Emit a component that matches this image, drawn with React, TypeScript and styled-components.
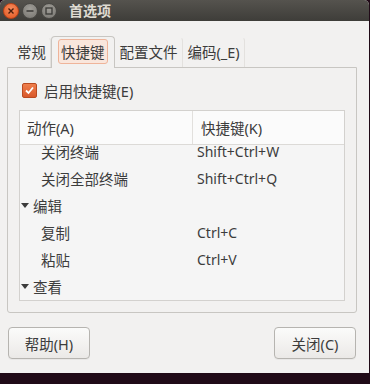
import styled, { createGlobalStyle } from 'styled-components';

const GlobalStyle = createGlobalStyle`
  html, body {
    margin: 0;
    padding: 0;
    background: #200a17;
  }
  body {
    font-family: "Noto Sans", "Noto Sans CJK SC", sans-serif;
    color: #3c3c3c;
  }
`;

const Window = styled.div`
  width: 369px;
  height: 373px;
  background: #f2f1f0;
  display: flex;
  flex-direction: column;
  overflow: hidden;
  border-radius: 5px 5px 0 0;
`;

const TitleBar = styled.div`
  height: 21px;
  background: linear-gradient(#55534e, #3e3d39);
  display: flex;
  align-items: center;
  padding-left: 3px;
  gap: 3px;
`;

const WinButton = styled.div<{ $close?: boolean }>`
  width: 16px;
  height: 16px;
  border-radius: 50%;
  display: flex;
  align-items: center;
  justify-content: center;
  background: ${p => (p.$close ? 'radial-gradient(circle at 50% 35%, #f58b5d, #e2561f)' : 'radial-gradient(circle at 50% 35%, #a09e98, #76746f)')};
  border: 1px solid ${p => (p.$close ? '#b8431a' : '#4a4945')};
  box-sizing: border-box;
`;

const Title = styled.div`
  margin-left: 9px;
  color: #dfdbd2;
  font-weight: bold;
  font-size: 14px;
  line-height: 21px;
`;

const Body = styled.div`
  flex: 1;
  display: flex;
  flex-direction: column;
  padding: 14px 12px 0 7px;
`;

const TabStrip = styled.div`
  display: flex;
  align-items: flex-end;
  height: 32px;
  padding-left: 5px;
`;

const Tab = styled.div<{ $active?: boolean }>`
  height: ${p => (p.$active ? '32px' : '30px')};
  padding: 0 ${p => (p.$active ? '6px' : '4px')} 2px;
  margin-bottom: ${p => (p.$active ? '-1px' : '0')};
  display: flex;
  align-items: center;
  font-size: 14.5px;
  box-sizing: border-box;
  position: relative;
  z-index: ${p => (p.$active ? 1 : 0)};
  background: #f2f1f0;
  border: 1px solid ${p => (p.$active ? '#c8c6c2' : 'transparent')};
  border-bottom: none;
  border-right-color: ${p => (p.$active ? '#c8c6c2' : '#e3e1de')};
  border-radius: 4px 4px 0 0;
`;

const FocusRing = styled.span`
  padding: 1px 2px;
  border: 1px solid #efb49a;
  border-radius: 3px;
  background: #f9e6dc;
`;

const Frame = styled.div`
  height: 246px;
  border: 1px solid #c8c6c2;
  border-radius: 0 0 3px 3px;
  box-sizing: border-box;
  padding: 14px 11px 11px 11px;
  display: flex;
  flex-direction: column;
`;

const CheckRow = styled.label`
  display: flex;
  align-items: center;
  gap: 7px;
  font-size: 14.5px;
  padding-left: 3px;
  height: 16px;
`;

const CheckBox = styled.span`
  width: 15px;
  height: 15px;
  border-radius: 2px;
  background: linear-gradient(#ef7f4c, #d9582a);
  border: 1px solid #b94a20;
  box-sizing: border-box;
  display: flex;
  align-items: center;
  justify-content: center;
`;

const Tree = styled.div`
  margin-top: 12px;
  flex: 1;
  border: 1px solid #d3d1ce;
  background: #f5f5f5;
  display: flex;
  flex-direction: column;
  overflow: hidden;
`;

const Header = styled.div`
  height: 33px;
  flex-shrink: 0;
  display: grid;
  grid-template-columns: 173px 1fr;
  background: #fbfbfb;
  border-bottom: 1px solid #dcdad7;
  font-size: 14.5px;
  position: relative;
  z-index: 1;
`;

const HeaderCell = styled.div<{ $last?: boolean }>`
  display: flex;
  align-items: center;
  padding-left: ${p => (p.$last ? '8px' : '7px')};
  border-right: ${p => (p.$last ? 'none' : '1px solid #e2e0dd')};
`;

// list is scrolled a few pixels, so the first row sits partly under the header
const Rows = styled.div`
  margin-top: -7px;
`;

const Row = styled.div`
  height: 27px;
  display: grid;
  grid-template-columns: 174px 1fr;
  align-items: center;
  font-size: 14.5px;
`;

const NameCell = styled.div<{ $depth: number }>`
  display: flex;
  align-items: center;
  padding-left: ${p => (p.$depth ? '21px' : '1px')};
  white-space: nowrap;
`;

const Expander = styled.span`
  width: 0;
  height: 0;
  border-left: 4px solid transparent;
  border-right: 4px solid transparent;
  border-top: 5px solid #3c3c3c;
  margin: 0 4px 0 0;
`;

const KeyCell = styled.div`
  padding-left: 3px;
  font-size: 14px;
`;

const Footer = styled.div`
  display: flex;
  justify-content: space-between;
  padding: 14px 13px 0 8px;
  margin-left: -7px;
  margin-right: -12px;
`;

const Button = styled.button`
  width: 82px;
  height: 32px;
  border: 1px solid #b6b4b0;
  border-radius: 4px;
  background: linear-gradient(#fbfbfa, #ebe9e7);
  font-family: "Noto Sans", "Noto Sans CJK SC", sans-serif;
  font-size: 14.5px;
  color: #3c3c3c;
  box-shadow: 0 1px 0 rgba(0, 0, 0, 0.04);
  padding: 0;
`;

type Item = { name: string; key?: string; group?: boolean };

const items: Item[] = [
  { name: '关闭终端', key: 'Shift+Ctrl+W' },
  { name: '关闭全部终端', key: 'Shift+Ctrl+Q' },
  { name: '编辑', group: true },
  { name: '复制', key: 'Ctrl+C' },
  { name: '粘贴', key: 'Ctrl+V' },
  { name: '查看', group: true },
];

export default function App() {
  return (
    <>
      <GlobalStyle />
      <Window>
        <TitleBar>
          <WinButton $close>
            <svg width="8" height="8" viewBox="0 0 8 8">
              <path d="M1.5 1.5 L6.5 6.5 M6.5 1.5 L1.5 6.5" stroke="#4a1d0c" strokeWidth="1.4" />
            </svg>
          </WinButton>
          <WinButton>
            <svg width="8" height="8" viewBox="0 0 8 8">
              <path d="M0.5 4 H7.5" stroke="#3a3936" strokeWidth="1.6" />
            </svg>
          </WinButton>
          <WinButton>
            <svg width="8" height="8" viewBox="0 0 8 8">
              <rect x="1" y="1" width="6" height="6" fill="none" stroke="#3a3936" strokeWidth="1.3" />
            </svg>
          </WinButton>
          <Title>首选项</Title>
        </TitleBar>
        <Body>
          <TabStrip>
            <Tab>常规</Tab>
            <Tab $active>
              <FocusRing>快捷键</FocusRing>
            </Tab>
            <Tab>配置文件</Tab>
            <Tab>编码(_E)</Tab>
          </TabStrip>
          <Frame>
            <CheckRow>
              <CheckBox>
                <svg width="11" height="11" viewBox="0 0 11 11">
                  <path d="M2 5.5 L4.5 8 L9 2.5" fill="none" stroke="#fff" strokeWidth="1.8" />
                </svg>
              </CheckBox>
              启用快捷键(E)
            </CheckRow>
            <Tree>
              <Header>
                <HeaderCell>动作(A)</HeaderCell>
                <HeaderCell $last>快捷键(K)</HeaderCell>
              </Header>
              <Rows>
                {items.map(it => (
                  <Row key={it.name}>
                    <NameCell $depth={it.group ? 0 : 1}>
                      {it.group && <Expander />}
                      {it.name}
                    </NameCell>
                    <KeyCell>{it.key}</KeyCell>
                  </Row>
                ))}
              </Rows>
            </Tree>
          </Frame>
          <Footer>
            <Button>帮助(H)</Button>
            <Button>关闭(C)</Button>
          </Footer>
        </Body>
      </Window>
    </>
  );
}
